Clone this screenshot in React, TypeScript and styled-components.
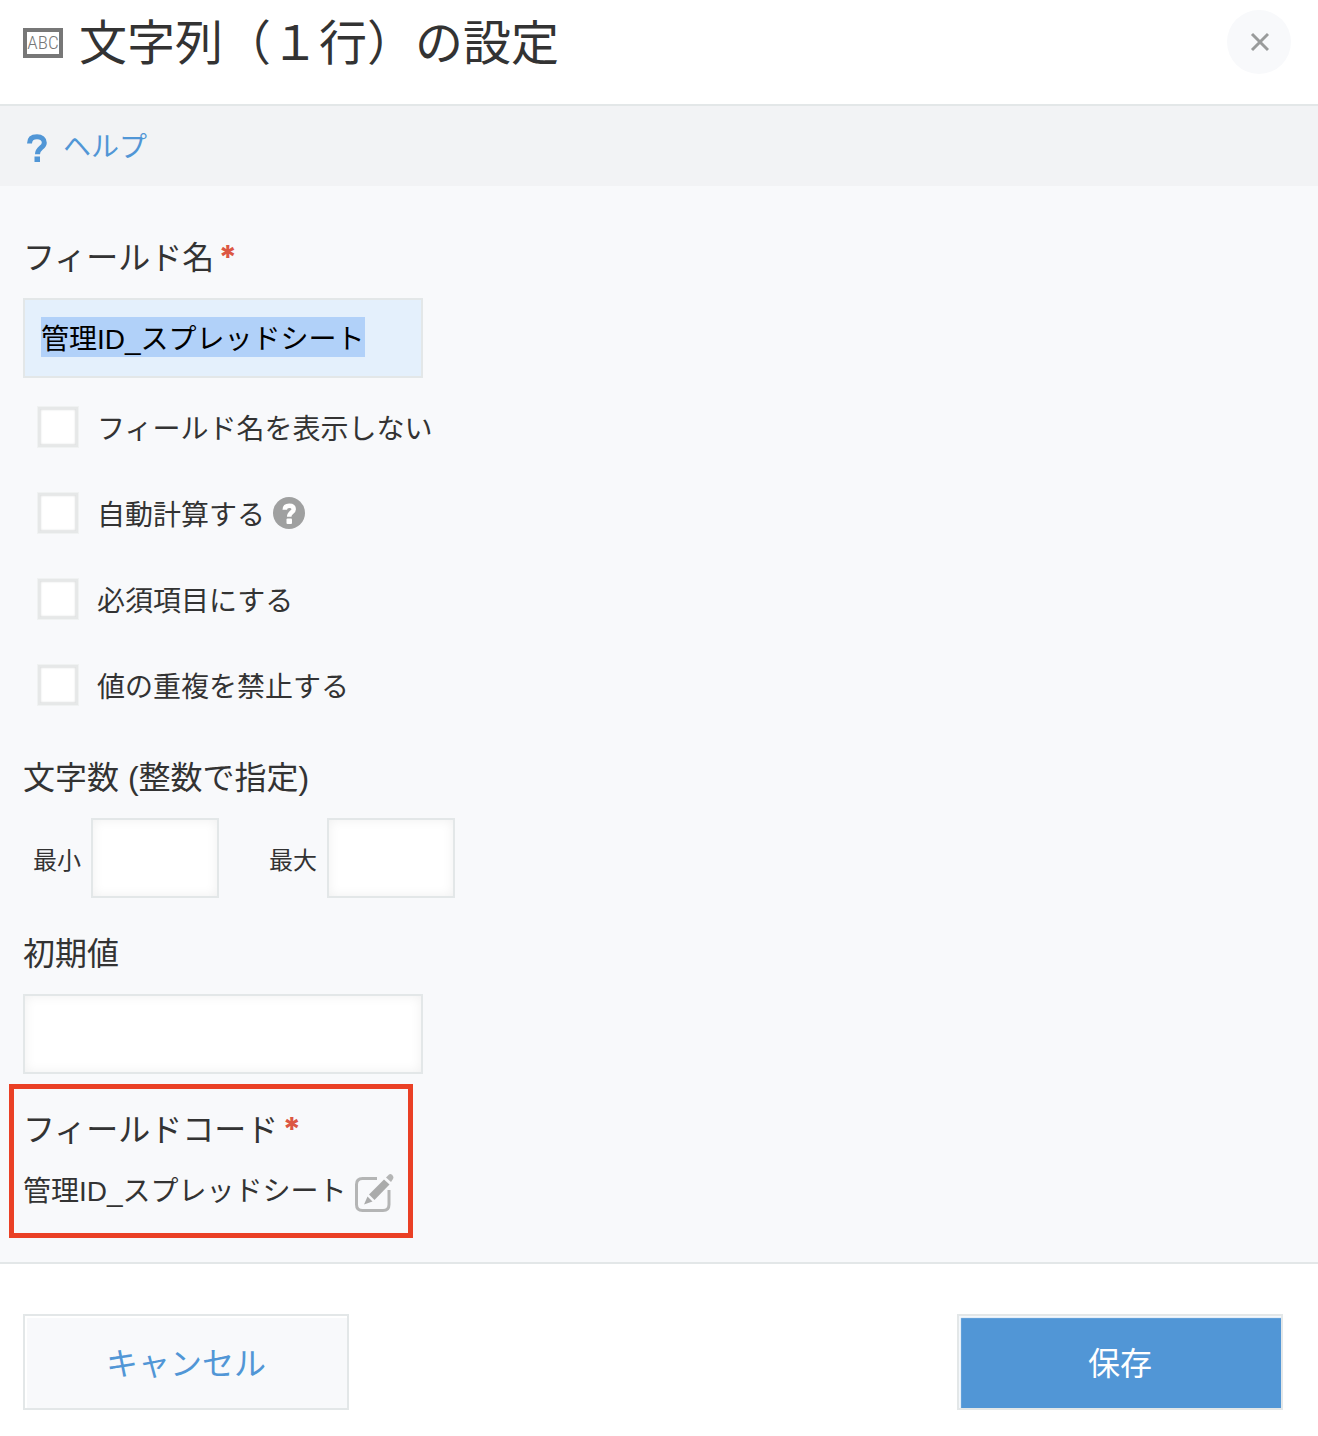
import React, { useEffect, useRef } from 'react';
import styled, { createGlobalStyle } from 'styled-components';

const color = {
  text: '#333333',
  link: '#5196d6',
  line: '#e3e7e8',
  body: '#f8f9fb',
  bar: '#f2f3f5',
  required: '#dc5743',
  callout: '#ea4025',
};

const GlobalStyle = createGlobalStyle`
  *, *::before, *::after { box-sizing: border-box; }
  body {
    margin: 0;
    background: #ffffff;
    color: ${color.text};
    font-family: "Liberation Sans", "Noto Sans CJK JP", sans-serif;
  }
  button, input { font-family: inherit; }
`;

const Dialog = styled.div`
  display: flex;
  flex-direction: column;
`;

const Header = styled.header`
  display: flex;
  align-items: center;
  gap: 16px;
  padding: 10px 27px 30px 23px;
  border-bottom: 2px solid ${color.line};
`;

const TypeBadge = styled.span`
  display: flex;
  align-items: center;
  justify-content: center;
  width: 40px;
  height: 30px;
  margin-top: 2px;
  border: 4px solid #777777;
  color: #777777;
  font-family: "Liberation Sans Narrow", "Roboto Condensed", "Noto Sans CJK JP", sans-serif;
  font-size: 19px;
  font-weight: 300;
  line-height: 22px;
`;

const Title = styled.h1`
  flex: 1;
  margin: 0;
  padding-top: 4px;
  font-size: 48px;
  font-weight: 400;
  line-height: 60px;
`;

const CloseButton = styled.button`
  display: flex;
  align-items: center;
  justify-content: center;
  width: 64px;
  height: 64px;
  padding: 0;
  border: 0;
  border-radius: 50%;
  background: ${color.body};
  cursor: pointer;
`;

const HelpBar = styled.nav`
  display: flex;
  padding: 18px 23px 14px;
  background: ${color.bar};
`;

const HelpLink = styled.a`
  display: flex;
  align-items: center;
  gap: 12px;
  color: ${color.link};
  font-size: 28px;
  line-height: 48px;
  text-decoration: none;
`;

const Body = styled.main`
  padding: 48px 23px 24px;
  background: ${color.body};
  border-bottom: 2px solid ${color.line};
`;

const Field = styled.div<{ $before?: number }>`
  display: flex;
  flex-direction: column;
  align-items: flex-start;
  gap: 16px;
  margin-top: ${(p) => p.$before ?? 0}px;
`;

const Label = styled.label`
  font-size: 32px;
  line-height: 48px;
`;

const Required = styled.span`
  margin-left: 4px;
  color: ${color.required};
  font-family: Inter, sans-serif;
  font-size: 32px;
  font-weight: 800;
  line-height: 1;
`;

const TextInput = styled.input<{ $width: number }>`
  width: ${(p) => p.$width}px;
  height: 80px;
  padding: 0 16px 2px;
  border: 2px solid ${color.line};
  border-radius: 0;
  outline: 0;
  background: #ffffff;
  box-shadow: inset 0 0 12px #f0f0f0;
  color: #000000;
  font-size: 28px;
  line-height: 42px;

  &:focus {
    background: #e4f0fc;
    box-shadow: none;
  }
  &::selection {
    background: rgba(176, 208, 249, 0.99);
    color: #000000;
  }
`;

const OptionList = styled.div`
  display: flex;
  flex-direction: column;
  gap: 44px;
  margin: 28px 0 0 14px;
`;

const OptionRow = styled.div`
  display: flex;
  align-items: center;
  gap: 8px;
`;

const OptionLabel = styled.label`
  display: flex;
  align-items: center;
  gap: 18px;
  font-size: 28px;
  line-height: 36px;
`;

const OptionText = styled.span`
  padding-top: 5px;
`;

const Checkbox = styled.input`
  appearance: none;
  width: 42px;
  height: 42px;
  margin: 0;
  border: 3px solid #e6e8e8;
  background: #ffffff;
  box-shadow: inset 0 0 2px 1px #e0e2e2;
  outline: 1px solid #f0f2f2;
  outline-offset: -1px;
`;

const HintButton = styled.button`
  display: flex;
  padding: 0;
  border: 0;
  background: none;
  cursor: pointer;
`;

const RangeGroup = styled.fieldset`
  min-width: 0;
  margin: 48px 0 0;
  padding: 0;
  border: 0;
`;

const RangeLegend = styled.legend`
  padding: 0;
  font-size: 32px;
  line-height: 48px;
`;

const RangeRow = styled.div`
  display: flex;
  gap: 50px;
  margin-top: 16px;
  padding-left: 10px;
`;

const RangeLabel = styled.label`
  display: flex;
  align-items: center;
  gap: 10px;
  font-size: 24px;
  line-height: 36px;
`;

const Callout = styled.section`
  display: flex;
  flex-direction: column;
  gap: 16px;
  width: fit-content;
  margin: 10px 0 0 -14px;
  padding: 17px 14px 19px 9px;
  border: 5px solid ${color.callout};
`;

const CodeHeading = styled.div`
  font-size: 32px;
  line-height: 48px;
`;

const CodeRow = styled.div`
  display: flex;
  align-items: center;
  gap: 3px;
  font-size: 28px;
  line-height: 44px;
`;

const Footer = styled.footer`
  display: flex;
  justify-content: space-between;
  padding: 50px 35px 26px 23px;
`;

const ActionButton = styled.button<{ $primary?: boolean }>`
  width: 326px;
  height: 96px;
  padding: 4px 0 0;
  border: 2px solid ${color.line};
  background: ${(p) => (p.$primary ? color.link : color.body)};
  box-shadow: inset 2px 2px 1px ${(p) => (p.$primary ? '#f4f8fc' : '#ffffff')};
  color: ${(p) => (p.$primary ? '#ffffff' : color.link)};
  font-size: 32px;
  line-height: 48px;
  cursor: pointer;
`;

const HelpIcon = () => (
  <svg width="28" height="28" viewBox="-4 0 28 28" aria-hidden="true">
    <path
      d="M2.500 9.500C2.500 4.800 5.500 2.700 10 2.700s7.300 2.300 7.300 6c0 5-6.800 5.200-6.800 11.500"
      fill="none"
      stroke="currentColor"
      strokeWidth="5"
    />
    <rect x="7.500" y="22.500" width="5.500" height="5.500" fill="currentColor" />
  </svg>
);

const HintIcon = () => (
  <svg width="32" height="32" viewBox="0 0 32 32" aria-hidden="true">
    <circle cx="16" cy="16" r="16" fill="#9fa0a0" />
    <path
      d="M11.800 12.800C11.800 10 13.400 8.800 16.200 8.800s4.500 1.300 4.500 3.500c0 3.200-4.500 3-4.500 7.500"
      fill="none"
      stroke="#ffffff"
      strokeWidth="4.500"
    />
    <rect x="13.500" y="21.500" width="5.500" height="5.500" rx="1" fill="#ffffff" />
  </svg>
);

const CloseIcon = () => (
  <svg width="20" height="20" viewBox="0 0 20 20" aria-hidden="true">
    <path d="M3 2L19 18M19 2L3 18" stroke="#999b9b" strokeWidth="3" />
  </svg>
);

const EditIcon = () => (
  <svg width="44" height="44" viewBox="0 0 44 44" aria-hidden="true">
    <path
      d="M27 8.500H12.500Q6.500 8.500 6.500 14.500V34.500Q6.500 40.500 12.500 40.500H33Q39 40.500 39 34.500V20"
      fill="none"
      stroke="#b4b5b5"
      strokeWidth="3"
    />
    <path d="M14 34.500L17.500 26.500L22.500 31.500Z" fill="#aaabab" />
    <path d="M19 24.500L34 9.500L39.500 14.500L24.500 30Z" fill="#aaabab" />
    <path d="M36 7.500L39 4.500Q40.500 3.500 42 4.800L43 6Q44 7.500 43 9L41 12Z" fill="#b4b5b5" />
  </svg>
);

const options = [
  { id: 'hide-name', text: 'フィールド名を表示しない' },
  { id: 'auto-calc', text: '自動計算する', hint: true },
  { id: 'required', text: '必須項目にする' },
  { id: 'unique', text: '値の重複を禁止する' },
];

export default function App() {
  const nameRef = useRef<HTMLInputElement>(null);

  useEffect(() => {
    nameRef.current?.focus();
    nameRef.current?.select();
  }, []);

  return (
    <Dialog role="dialog" aria-labelledby="dialog-title">
      <GlobalStyle />
      <Header>
        <TypeBadge>ABC</TypeBadge>
        <Title id="dialog-title">文字列（１行）の設定</Title>
        <CloseButton type="button" aria-label="閉じる">
          <CloseIcon />
        </CloseButton>
      </Header>

      <HelpBar>
        <HelpLink href="#help">
          <HelpIcon />
          ヘルプ
        </HelpLink>
      </HelpBar>

      <Body>
        <Field>
          <Label htmlFor="field-name">
            フィールド名<Required>*</Required>
          </Label>
          <TextInput
            ref={nameRef}
            id="field-name"
            type="text"
            $width={400}
            defaultValue="管理ID_スプレッドシート"
            spellCheck={false}
          />
        </Field>

        <OptionList>
          {options.map((option) => (
            <OptionRow key={option.id}>
              <OptionLabel htmlFor={option.id}>
                <Checkbox id={option.id} type="checkbox" />
                <OptionText>{option.text}</OptionText>
              </OptionLabel>
              {option.hint && (
                <HintButton type="button" aria-label="自動計算のヘルプ">
                  <HintIcon />
                </HintButton>
              )}
            </OptionRow>
          ))}
        </OptionList>

        <RangeGroup>
          <RangeLegend>文字数 (整数で指定)</RangeLegend>
          <RangeRow>
            <RangeLabel htmlFor="min-length">
              <OptionText>最小</OptionText>
              <TextInput id="min-length" type="text" inputMode="numeric" $width={128} />
            </RangeLabel>
            <RangeLabel htmlFor="max-length">
              <OptionText>最大</OptionText>
              <TextInput id="max-length" type="text" inputMode="numeric" $width={128} />
            </RangeLabel>
          </RangeRow>
        </RangeGroup>

        <Field $before={32}>
          <Label htmlFor="default-value">初期値</Label>
          <TextInput id="default-value" type="text" $width={400} />
        </Field>

        <Callout>
          <CodeHeading>
            フィールドコード<Required>*</Required>
          </CodeHeading>
          <CodeRow>
            管理ID_スプレッドシート
            <HintButton type="button" aria-label="フィールドコードを編集">
              <EditIcon />
            </HintButton>
          </CodeRow>
        </Callout>
      </Body>

      <Footer>
        <ActionButton type="button">キャンセル</ActionButton>
        <ActionButton type="button" $primary>
          保存
        </ActionButton>
      </Footer>
    </Dialog>
  );
}
